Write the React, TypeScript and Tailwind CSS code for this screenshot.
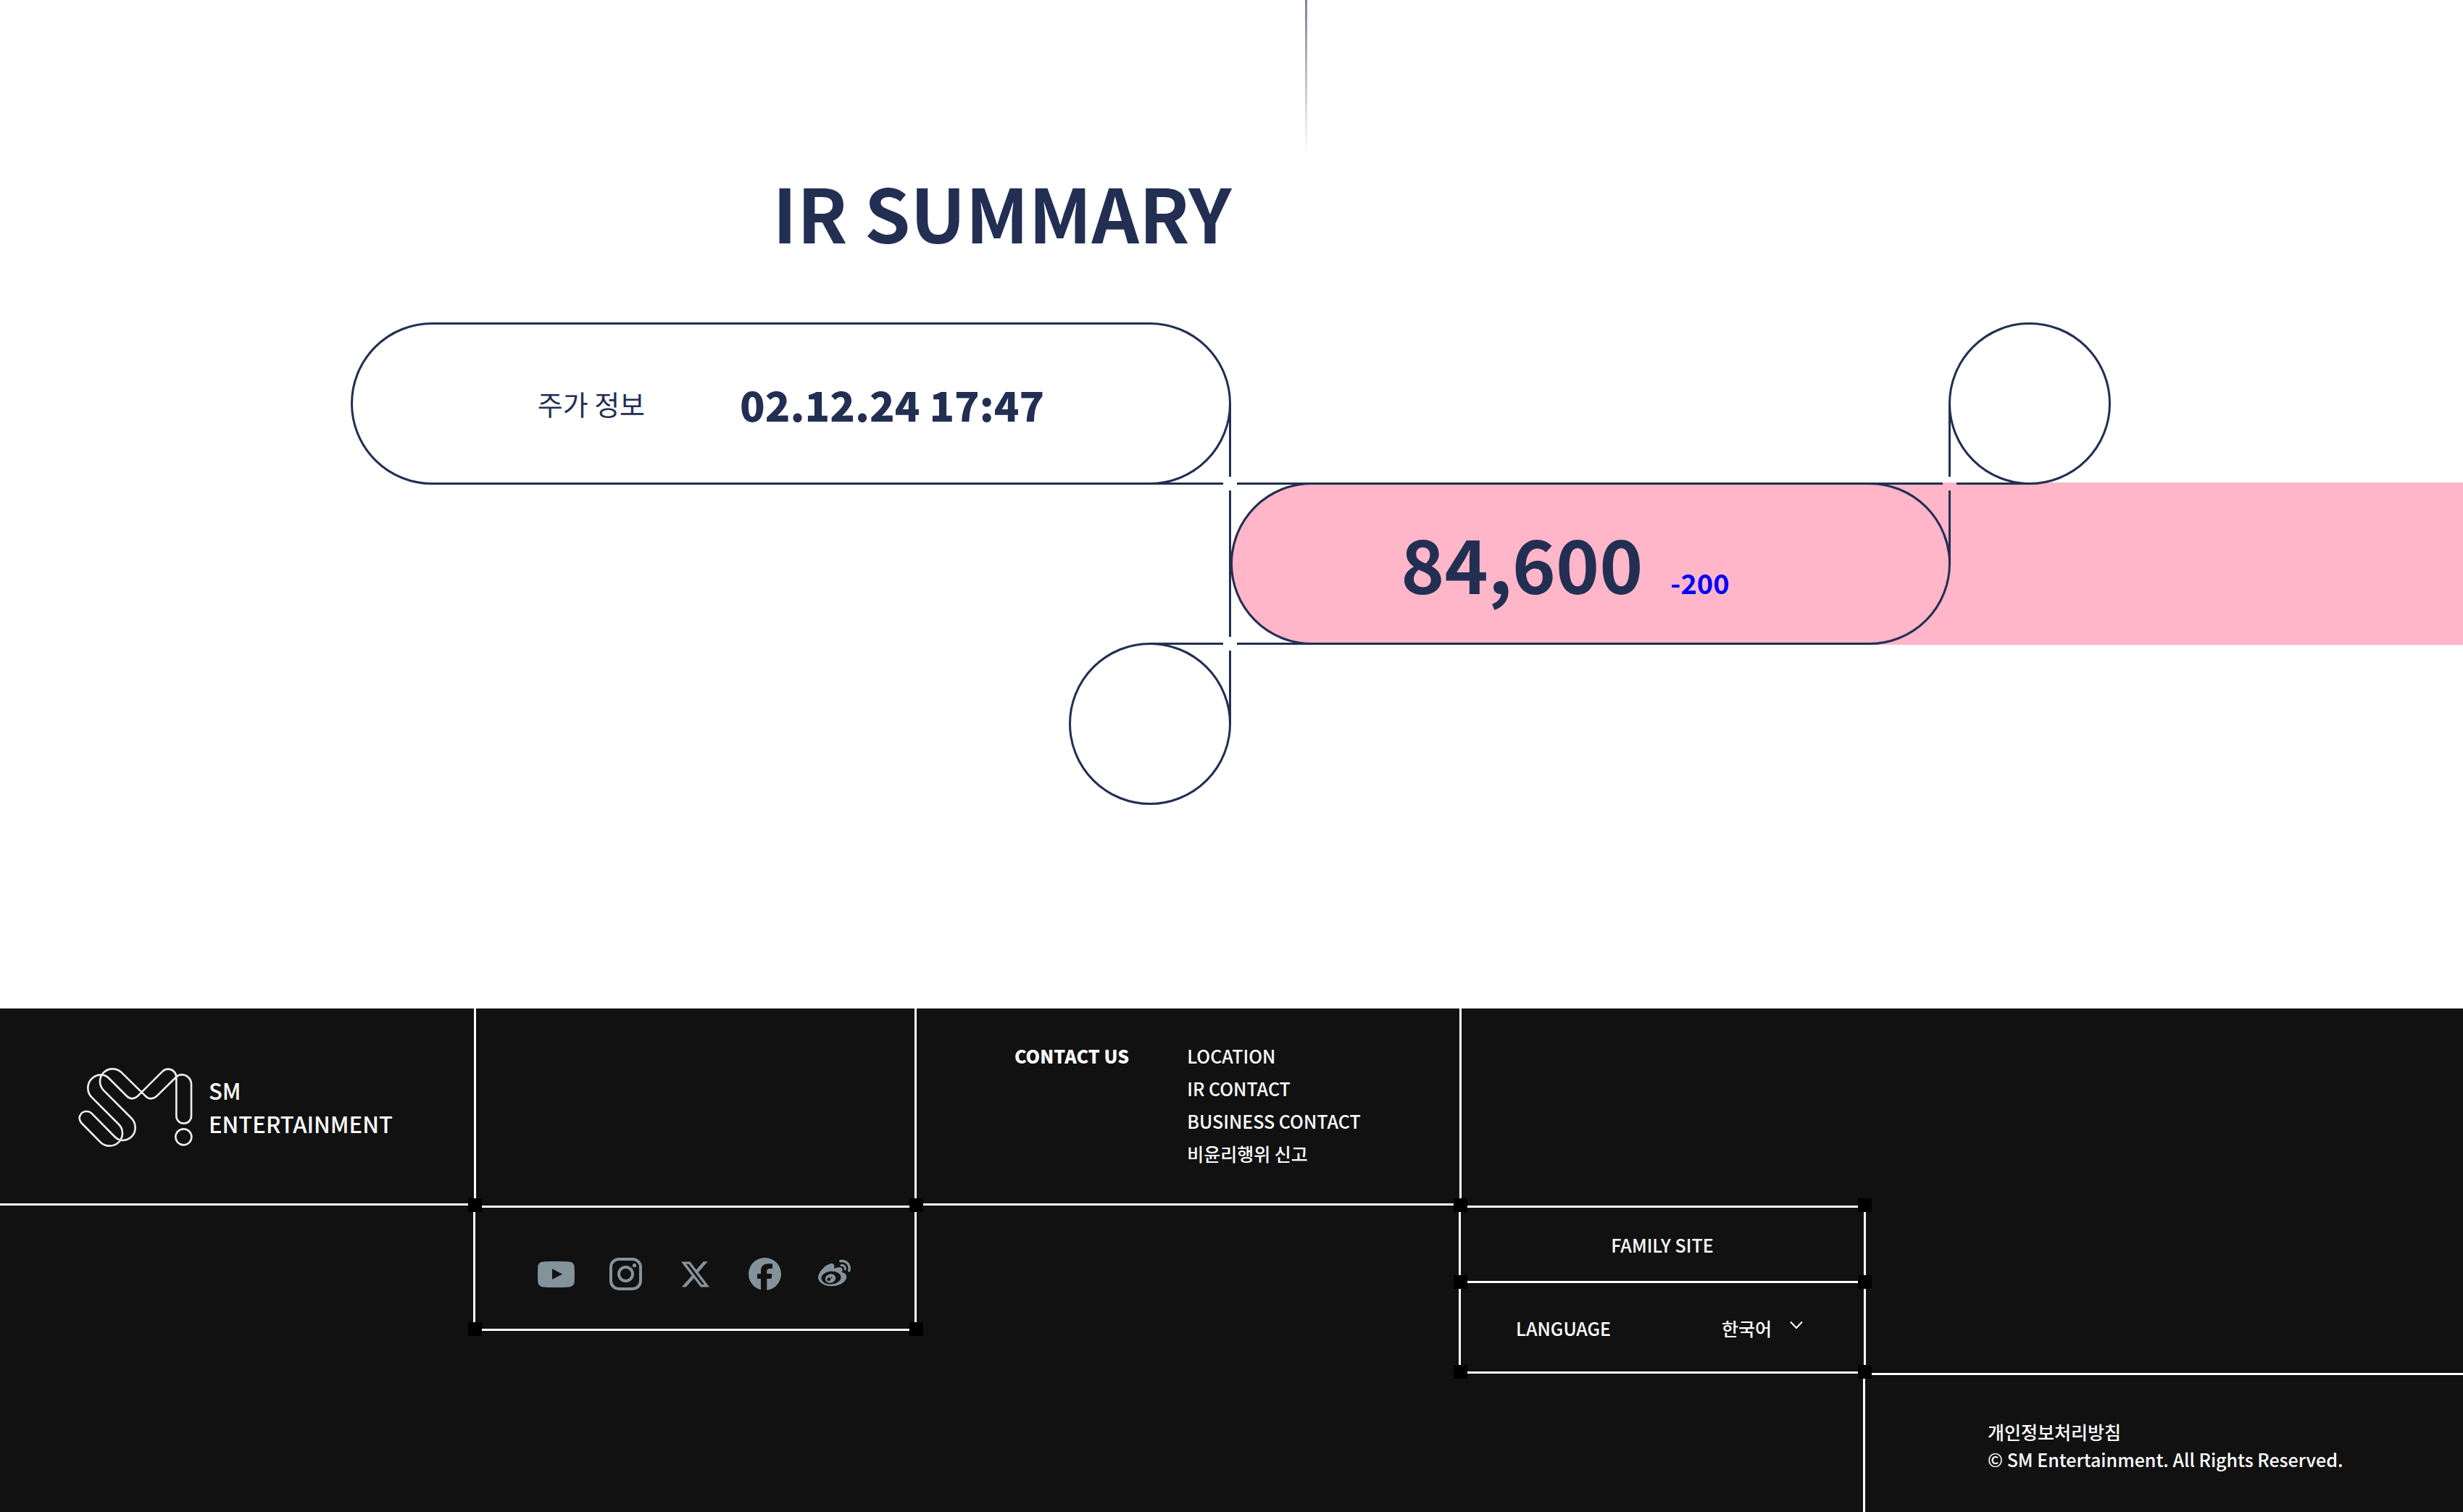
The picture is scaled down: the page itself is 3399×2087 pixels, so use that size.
import React from "react";
import { FaWeibo } from "react-icons/fa";

type CornerSide = "tl" | "tr" | "bl" | "br";

const CORNERS: Record<CornerSide, { box: string; h: string; v: string }> = {
  tl: { box: "-top-[3px] -left-[5px]", h: "top-0 right-0 left-[11px]", v: "left-0 bottom-0 top-[11px]" },
  bl: { box: "-bottom-[3px] -left-[5px]", h: "bottom-0 right-0 left-[11px]", v: "left-0 top-0 bottom-[11px]" },
  tr: { box: "-top-[3px] -right-[3px]", h: "top-0 left-0 right-[11px]", v: "right-0 bottom-0 top-[11px]" },
  br: { box: "-bottom-[3px] -right-[3px]", h: "bottom-0 left-0 right-[11px]", v: "right-0 top-0 bottom-[11px]" },
};

/* Straight lines that square off one corner of a pill, stopping short of the crossing. */
function Corner({ side, flush = false }: { side: CornerSide; flush?: boolean }) {
  const c = CORNERS[side];
  return (
    <span aria-hidden="true" className={`absolute size-28 ${flush ? "-bottom-[3px] -left-[3px]" : c.box}`}>
      <span className={`absolute h-[3px] bg-[#222f53] ${c.h}`} />
      <span className={`absolute w-[3px] bg-[#222f53] ${c.v}`} />
    </span>
  );
}

function Node({ className }: { className: string }) {
  return <span aria-hidden="true" className={`absolute z-10 size-[19px] bg-black ${className}`} />;
}

function Logo() {
  return (
    <svg viewBox="36 30 480 336" className="h-[112px] w-[160px] shrink-0" fill="none" stroke="#ececec" strokeWidth="8" aria-hidden="true">
      <path d="M95 158 L207 270 C217 280 222 292 222 307 C222 336 198 359 168 359 C154 359 142 354 132 345 L52 264 C36 246 46 216 73 216 C82 216 89 219 94 224 L187 318 C197 329 208 336 222 336 C251 336 275 313 275 284 C275 268 269 254 258 243 L145 130 C134 119 129 107 129 93 C129 63 152 40 181 40 C195 40 206 44 216 53 L316 151 C322 158 331 163 340 163 C350 163 358 159 365 152 L440 78 C448 69 456 64 467 64 C490 64 507 82 507 105 V235 C507 253 493 266 476 266 C459 266 445 253 445 235 V75 C445 56 430 41 411 41 C401 41 393 45 386 52 L286 152 C279 159 272 163 262 163 C253 163 246 159 240 153 L168 81 C158 70 147 65 133 65 C103 65 79 89 79 119 C79 133 84 147 95 158Z" />
      <circle cx="475" cy="322" r="33" />
    </svg>
  );
}

function YoutubeIcon() {
  return (
    <svg viewBox="0 0 51 36" className="h-9 w-[51px]" aria-hidden="true">
      <path fill="currentColor" fillRule="evenodd" d="M8 .6 C18 -.2 33 -.2 43 .6 C48 1 50.4 3.500 50.700 8 C51.100 15 51.100 21 50.700 28 C50.400 32.500 48 35 43 35.400 C33 36.200 18 36.200 8 35.400 C3 35 .6 32.500 .3 28 C-.1 21 -.1 15 .3 8 C.6 3.500 3 1 8 .6Z M20 10.300 V25 L34 17.700Z" />
    </svg>
  );
}

function InstagramIcon() {
  return (
    <svg viewBox="0 0 45 45" className="size-[45px]" fill="none" stroke="currentColor" strokeWidth="4" aria-hidden="true">
      <rect x="2" y="2" width="41" height="41" rx="11" />
      <circle cx="22.500" cy="22.500" r="9.500" />
      <circle cx="34.500" cy="10.700" r="2.600" fill="currentColor" stroke="none" />
    </svg>
  );
}

function XIcon() {
  return (
    <svg viewBox="0 1 24 22" className="h-9 w-[39px]" fill="currentColor" aria-hidden="true">
      <path d="M18.901 1.153h3.680l-8.040 9.190L24 22.846h-7.406l-5.800-7.584-6.638 7.584H.474l8.600-9.830L0 1.154h7.594l5.243 6.932ZM17.610 20.644h2.039L6.486 3.240H4.298Z" />
    </svg>
  );
}

function FacebookIcon() {
  return (
    <svg viewBox="0 0 45 45" className="size-[45px]" aria-hidden="true">
      <circle cx="22.500" cy="22.500" r="22.500" fill="currentColor" />
      <path fill="#111" d="M17 46 V29 H12 V22.300 H17 V18.500 C17 11.500 21 8.300 27 8.300 H33 V15 H29.500 C26.500 15 25.300 16.500 25.300 19 V22.300 H32.500 L31.500 29 H25.300 V46Z" />
    </svg>
  );
}

const SOCIALS = [
  { name: "YouTube", icon: <YoutubeIcon /> },
  { name: "Instagram", icon: <InstagramIcon /> },
  { name: "X", icon: <XIcon /> },
  { name: "Facebook", icon: <FacebookIcon /> },
  { name: "Weibo", icon: <FaWeibo className="size-[45px]" aria-hidden="true" /> },
];

const CONTACTS = ["LOCATION", "IR CONTACT", "BUSINESS CONTACT", "비윤리행위 신고"];

function IrSummary() {
  return (
    <section className="text-[#222f53]">
      <div className="ml-[53%] h-[212px] w-[3px] bg-linear-to-b from-[#222f53]/60 to-transparent" />
      <h2 className="mt-5 w-1/2 text-right text-[102px] leading-[120px] font-bold">IR SUMMARY</h2>

      <div className="mt-[93px] grid auto-rows-[221px] grid-cols-[484fr_992fr_220fr_993fr_710fr] pb-[284px]">
        <div className="relative col-span-2 col-start-2 -mr-[3px] -mb-[3px] flex items-center justify-center gap-[131px] rounded-full border-[3px] border-[#222f53]">
          <Corner side="br" />
          <span className="text-[38px] leading-[60px]">주가 정보</span>
          <time className="text-[57px] leading-[80px] font-black">02.12.24 17:47</time>
        </div>
        <div className="relative z-10 col-start-5 size-56 rounded-full border-[3px] border-[#222f53]">
          <Corner side="bl" flush />
        </div>

        <div className="col-span-2 col-start-4 row-start-2 -mb-[3px] ml-[2px] rounded-l-full bg-[#ffb6c9]" />
        <div className="relative col-start-4 row-start-2 -mr-[3px] -mb-[3px] ml-[2px] flex items-baseline justify-center gap-[38px] rounded-full border-[3px] border-[#222f53] pt-8 pr-[70px]">
          <Corner side="tl" />
          <Corner side="bl" />
          <Corner side="tr" />
          <strong className="text-[102px] leading-[150px] font-bold">84,600</strong>
          <span className="text-[38px] leading-[60px] font-bold text-[#0000ff]">-200</span>
        </div>

        <div className="relative col-span-2 col-start-2 row-start-3 -mr-[3px] size-56 justify-self-end rounded-full border-[3px] border-[#222f53]">
          <Corner side="tr" />
        </div>
      </div>
    </section>
  );
}

function Footer() {
  return (
    <footer className="grid min-h-[695px] grow grid-cols-[657fr_608fr_752fr_558fr_824fr] bg-[#111] text-[25px] leading-[45px] font-medium text-white">
      <div className="flex h-[272px] items-center gap-[21px] border-r-[3px] border-b-[3px] border-white pt-[2px] pl-[107px]">
        <Logo />
        <p className="text-[31px] leading-[46px]">
          SM
          <br />
          ENTERTAINMENT
        </p>
      </div>

      <div>
        <div className="h-[272px] border-r-[3px] border-white" />
        <nav aria-label="Social media" className="relative -ml-1 h-[173px] border-[3px] border-white">
          <Node className="-top-[13px] -left-[10px]" />
          <Node className="-top-[13px] -right-[12px]" />
          <Node className="-bottom-[10px] -left-[10px]" />
          <Node className="-right-[12px] -bottom-[10px]" />
          <ul className="flex h-full items-center justify-center gap-[50px] pt-4 text-[#84939b]">
            {SOCIALS.map((s) => (
              <li key={s.name}>
                <a href="#" aria-label={s.name} className="flex w-[46px] justify-center">
                  <span className="shrink-0">{s.icon}</span>
                </a>
              </li>
            ))}
          </ul>
        </nav>
      </div>

      <div className="flex h-[272px] gap-20 border-r-[3px] border-b-[3px] border-white pt-[43px] pl-[135px]">
        <h3 className="font-black">CONTACT US</h3>
        <ul>
          {CONTACTS.map((c) => (
            <li key={c}>
              <a href="#">{c}</a>
            </li>
          ))}
        </ul>
      </div>

      <div className="pt-[272px]">
        <div className="relative -ml-1 h-[107px] border-[3px] border-white">
          <Node className="-top-[13px] -left-[10px]" />
          <Node className="-top-[13px] -right-[11px]" />
          <button type="button" className="h-full w-full pt-[2px]">
            FAMILY SITE
          </button>
        </div>
        <div className="relative -ml-1 flex h-[125px] items-center justify-between border-x-[3px] border-b-[3px] border-white pt-[2px] pr-[84px] pl-[76px]">
          <Node className="-top-[11px] -left-[10px]" />
          <Node className="-top-[11px] -right-[11px]" />
          <Node className="-bottom-[10px] -left-[10px]" />
          <Node className="-right-[11px] -bottom-[10px]" />
          <label htmlFor="language">LANGUAGE</label>
          <div className="flex items-center gap-6">
            <select id="language" className="appearance-none bg-transparent" defaultValue="ko">
              <option value="ko">한국어</option>
            </select>
            <svg viewBox="0 0 18 12" className="mb-2 h-3 w-[18px]" fill="none" stroke="#fff" strokeWidth="2" aria-hidden="true">
              <path d="M1 1.500 L9 10 L17 1.500" />
            </svg>
          </div>
        </div>
      </div>

      <div className="flex flex-col pt-[503px]">
        <div className="-ml-1 grow border-t-[3px] border-l-[3px] border-white pt-[59px] pl-[169px] leading-[38px]">
          <a href="#">개인정보처리방침</a>
          <p>© SM Entertainment. All Rights Reserved.</p>
        </div>
      </div>
    </footer>
  );
}

export default function App() {
  return (
    <div className="flex min-h-screen flex-col bg-white font-['Noto_Sans_CJK_JP','Noto_Sans_CJK_KR',sans-serif]">
      <IrSummary />
      <Footer />
    </div>
  );
}
